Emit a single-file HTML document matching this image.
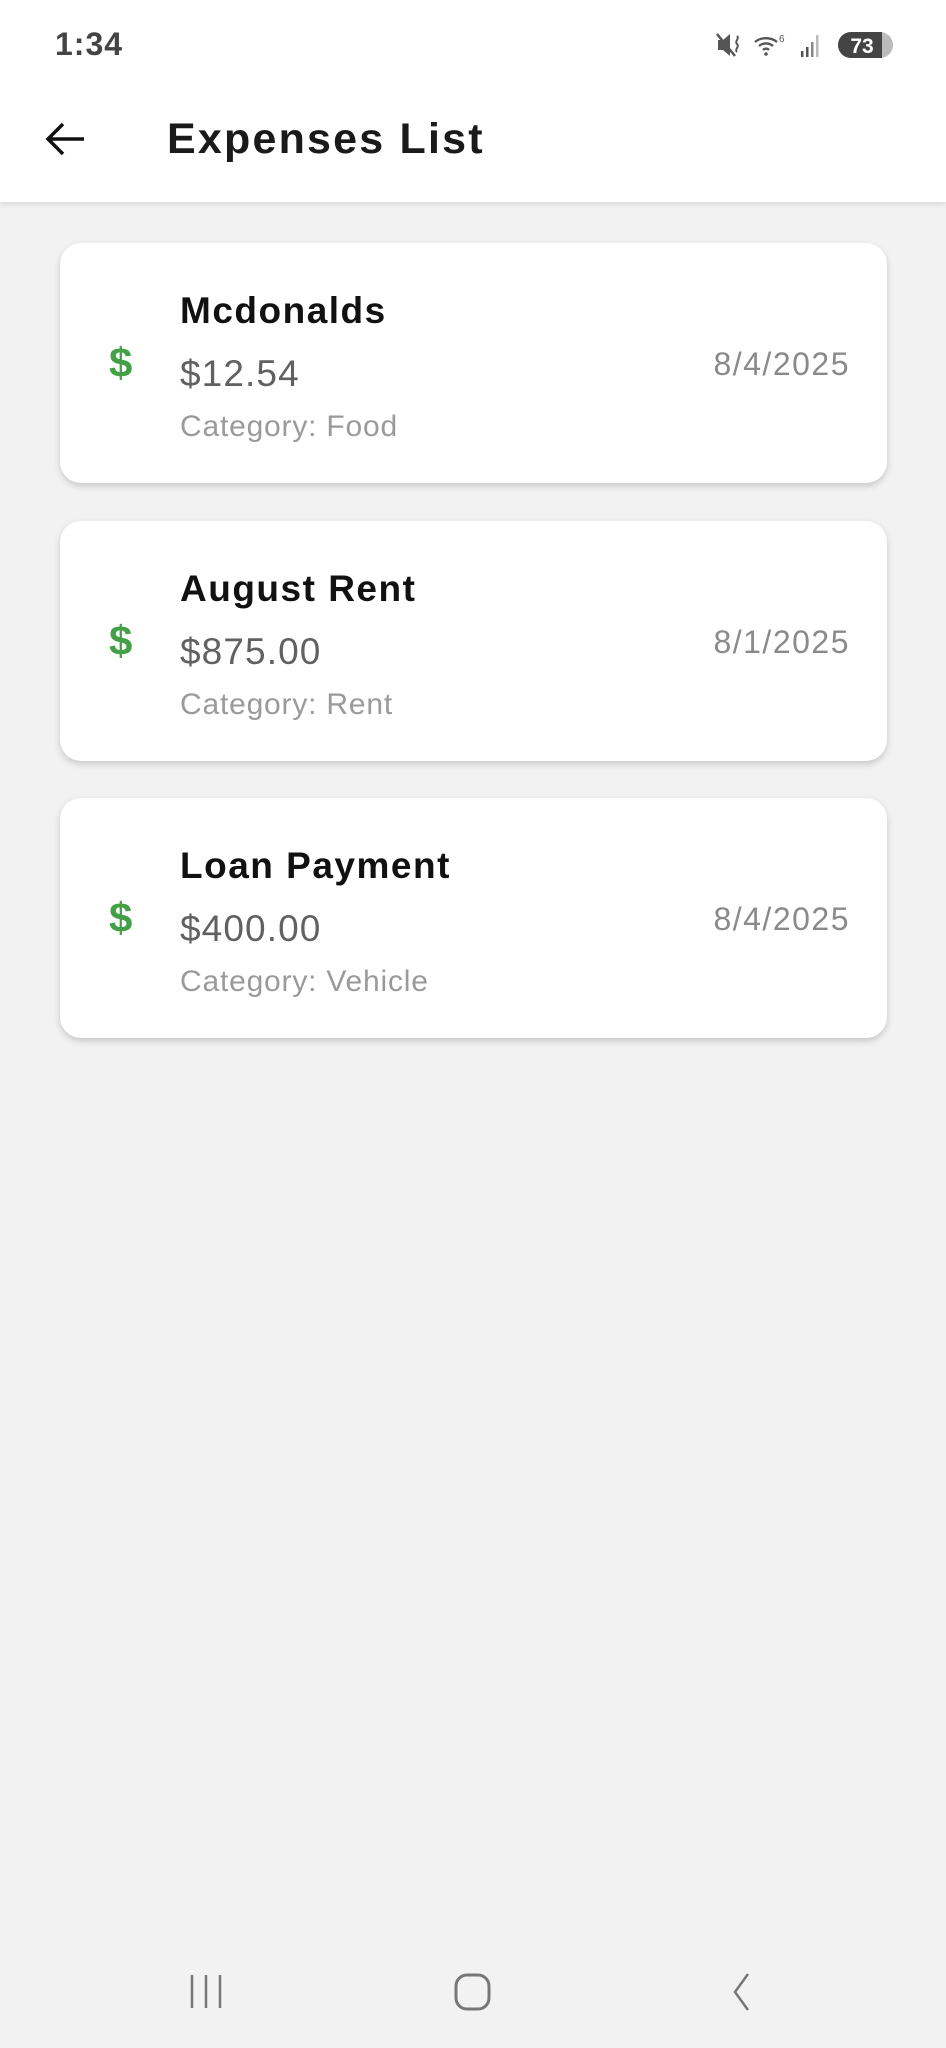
<!DOCTYPE html>
<html><head><meta charset="utf-8"><style>
*{margin:0;padding:0;box-sizing:border-box}
body{width:946px;height:2048px;background:#f2f2f2;font-family:"Liberation Sans",sans-serif;position:relative;overflow:hidden}
.abs{position:absolute}
.header{position:absolute;left:0;top:0;width:946px;height:202px;background:#fff;box-shadow:0 2px 6px rgba(0,0,0,0.12)}
.card{position:absolute;left:60px;width:827px;height:240px;background:#fff;border-radius:21px;box-shadow:0 3px 7px rgba(0,0,0,0.18)}
.dol{position:absolute;left:49px;top:93px;font-size:42px;font-weight:bold;color:#43a047;line-height:54px}
.t{position:absolute;left:120px;top:46px;font-size:37px;font-weight:bold;color:#111;line-height:44px;letter-spacing:1.5px}
.a{position:absolute;left:120px;top:110px;font-size:37px;color:#616161;line-height:42px;letter-spacing:1.1px}
.c{position:absolute;left:120px;top:167px;font-size:30px;color:#9a9a9a;line-height:34px;letter-spacing:0.8px}
.d{position:absolute;right:37px;top:103px;font-size:32px;color:#8a8a8a;line-height:36px;letter-spacing:1.5px}
</style></head><body>
<div class="header"></div>
<div class="abs" style="left:55px;top:25px;font-size:32px;font-weight:bold;color:#444;line-height:38px;letter-spacing:1px">1:34</div>
<svg class="abs" style="left:715px;top:30px" width="180" height="30" viewBox="0 0 180 30">
<path d="M3 10h5l7-6v22l-7-6H3z" fill="#555"/><path d="M2 4l18 22" stroke="#555" stroke-width="2.5"/>
<path d="M22 6c3 3-3 5 0 8s-3 5 0 8" stroke="#555" stroke-width="2" fill="none"/>
<path d="M40 12a16 14 0 0 1 22 0M44 16a10 9 0 0 1 14 0M48 20a4 4 0 0 1 6 0" stroke="#555" stroke-width="2.3" fill="none"/><circle cx="51" cy="24" r="1.8" fill="#555"/>
<text x="64" y="12" font-size="10" fill="#555" font-family="Liberation Sans">6</text>
<rect x="86" y="21" width="2.5" height="6" fill="#555"/><rect x="91" y="17" width="2.5" height="10" fill="#555"/><rect x="96" y="12" width="2.5" height="15" fill="#888"/><rect x="101" y="5" width="2.5" height="22" fill="#bbb"/>
<rect x="123" y="2" width="55" height="26" rx="13" fill="#bbb"/><path d="M136 2h31v26h-31a13 13 0 0 1 0-26z" fill="#444"/>
<text x="147" y="23" font-size="21" font-weight="bold" fill="#fff" text-anchor="middle" font-family="Liberation Sans">73</text>
</svg>
<svg class="abs" style="left:44px;top:120px" width="42" height="38" viewBox="0 0 42 38"><path d="M40 19H5M19 4L4 19l15 15" stroke="#111" stroke-width="3.5" fill="none"/></svg>
<div class="abs" style="left:167px;top:113px;font-size:43px;font-weight:bold;color:#1a1a1a;line-height:52px;letter-spacing:2.2px">Expenses List</div>

<div class="card" style="top:243px"><div class="dol">$</div><div class="t">Mcdonalds</div><div class="a">$12.54</div><div class="c">Category: Food</div><div class="d">8/4/2025</div></div>
<div class="card" style="top:521px"><div class="dol">$</div><div class="t">August Rent</div><div class="a">$875.00</div><div class="c">Category: Rent</div><div class="d">8/1/2025</div></div>
<div class="card" style="top:798px"><div class="dol">$</div><div class="t">Loan Payment</div><div class="a">$400.00</div><div class="c">Category: Vehicle</div><div class="d">8/4/2025</div></div>

<svg class="abs" style="left:180px;top:1965px" width="600" height="55" viewBox="0 0 600 55">
<path d="M12 10v33M26 10v33M40 10v33" stroke="#777" stroke-width="2.5"/>
<rect x="276" y="10" width="33" height="34" rx="11" stroke="#777" stroke-width="3" fill="none"/>
<path d="M568 9l-13 18 13 18" stroke="#777" stroke-width="2.5" fill="none"/>
</svg>
</body></html>
